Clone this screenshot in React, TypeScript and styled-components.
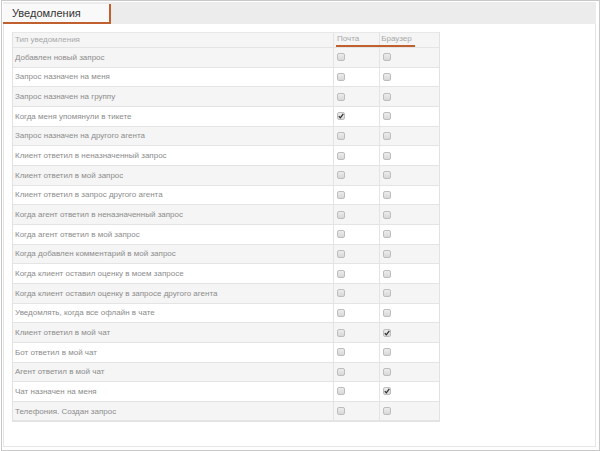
import React from "react";
import styled, { createGlobalStyle } from "styled-components";

const GlobalStyle = createGlobalStyle`
  html, body {
    margin: 0;
    padding: 0;
    background: #ffffff;
  }
  body {
    font-family: "Liberation Sans", Arial, sans-serif;
  }
`;

type Row = {
  title: string;
  mail: boolean;
  browser: boolean;
};

const rows: Row[] = [
  { title: "Добавлен новый запрос", mail: false, browser: false },
  { title: "Запрос назначен на меня", mail: false, browser: false },
  { title: "Запрос назначен на группу", mail: false, browser: false },
  { title: "Когда меня упомянули в тикете", mail: true, browser: false },
  { title: "Запрос назначен на другого агента", mail: false, browser: false },
  { title: "Клиент ответил в неназначенный запрос", mail: false, browser: false },
  { title: "Клиент ответил в мой запрос", mail: false, browser: false },
  { title: "Клиент ответил в запрос другого агента", mail: false, browser: false },
  { title: "Когда агент ответил в неназначенный запрос", mail: false, browser: false },
  { title: "Когда агент ответил в мой запрос", mail: false, browser: false },
  { title: "Когда добавлен комментарий в мой запрос", mail: false, browser: false },
  { title: "Когда клиент оставил оценку в моем запросе", mail: false, browser: false },
  { title: "Когда клиент оставил оценку в запросе другого агента", mail: false, browser: false },
  { title: "Уведомлять, когда все офлайн в чате", mail: false, browser: false },
  { title: "Клиент ответил в мой чат", mail: false, browser: true },
  { title: "Бот ответил в мой чат", mail: false, browser: false },
  { title: "Агент ответил в мой чат", mail: false, browser: false },
  { title: "Чат назначен на меня", mail: false, browser: true },
  { title: "Телефония. Создан запрос", mail: false, browser: false },
];

const Frame = styled.div`
  box-sizing: border-box;
  width: 599px;
  height: 451px;
  margin-left: 1px;
  border: 1px solid #c9c9c9;
  padding: 1px 3px 3px 1px;
  display: flex;
  flex-direction: column;
`;

const Panel = styled.div`
  flex: 1;
  display: flex;
  flex-direction: column;
  border: 1px solid #e6e6e6;
  border-top: none;
`;

const TabBar = styled.div`
  height: 20px;
  background: #ececec;
  display: flex;
  align-items: stretch;
  padding-top: 2px;
`;

const Tab = styled.div`
  box-sizing: border-box;
  width: 108px;
  background: #f9f9f9;
  border-right: 2px solid #c0602f;
  border-bottom: 2px solid #c0602f;
  padding-left: 9px;
  display: flex;
  align-items: center;
  font-size: 11px;
  color: #333;
`;

const Content = styled.div`
  flex: 1;
  padding: 8px 0 0 8px;
  background: #fff;
`;

const Table = styled.div`
  width: 426px;
  border: 1px solid #e2e2e2;
  border-top: none;
`;

const Line = styled.div<{ $shade: boolean; $head?: boolean }>`
  display: grid;
  grid-template-columns: 320px 46px 58px;
  height: ${(p) => (p.$head ? "16px" : "19.67px")};
  box-sizing: border-box;
  border-bottom: 1px solid #e4e4e4;
  background: ${(p) => (p.$shade ? "#f5f5f5" : "#ffffff")};
  ${(p) => p.$head && "border-top: 1px solid #e8e8e8;"}
`;

const Cell = styled.div<{ $divider?: boolean }>`
  display: flex;
  align-items: center;
  padding-left: 2px;
  font-size: 8px;
  color: #8c8c8c;
  white-space: nowrap;
  ${(p) => p.$divider && "border-left: 1px solid #e4e4e4;"}
`;

const HeadCell = styled(Cell)`
  color: #a8a8a8;
  align-items: flex-end;
`;

const HeadText = styled.span`
  padding-bottom: 3px;
`;

const HeadLabel = styled.span<{ $fill?: boolean }>`
  display: block;
  border-bottom: 2px solid #c0602f;
  padding: 0 0 2px 0;
  ${(p) =>
    p.$fill ? "flex: 1; padding-left: 1px;" : "padding-right: 3px; margin-left: -1px;"}
`;

const Box = styled.span<{ $on: boolean }>`
  box-sizing: border-box;
  width: 8px;
  height: 8px;
  margin-left: 1px;
  border: 1px solid #bdbdbd;
  border-radius: 2px;
  background: linear-gradient(#ececec, #d8d8d8);
  display: flex;
  align-items: center;
  justify-content: center;
`;

function Check({ on }: { on: boolean }) {
  return (
    <Box $on={on}>
      {on && (
        <svg width="6" height="6" viewBox="0 0 6 6">
          <path d="M0.8 3.2 L2.3 4.8 L5.3 0.8" stroke="#2a2a2a" strokeWidth="1.2" fill="none" />
        </svg>
      )}
    </Box>
  );
}

export default function App() {
  return (
    <>
      <GlobalStyle />
      <Frame>
        <TabBar>
          <Tab>Уведомления</Tab>
        </TabBar>
        <Panel>
          <Content>
            <Table>
              <Line $shade $head>
                <HeadCell>
                  <HeadText>Тип уведомления</HeadText>
                </HeadCell>
                <HeadCell $divider>
                  <HeadLabel $fill>Почта</HeadLabel>
                </HeadCell>
                <HeadCell $divider style={{ paddingLeft: 0 }}>
                  <HeadLabel>&nbsp;Браузер</HeadLabel>
                </HeadCell>
              </Line>
              {rows.map((r, i) => (
                <Line key={r.title} $shade={i % 2 === 0}>
                  <Cell>{r.title}</Cell>
                  <Cell $divider>
                    <Check on={r.mail} />
                  </Cell>
                  <Cell $divider>
                    <Check on={r.browser} />
                  </Cell>
                </Line>
              ))}
            </Table>
          </Content>
        </Panel>
      </Frame>
    </>
  );
}
